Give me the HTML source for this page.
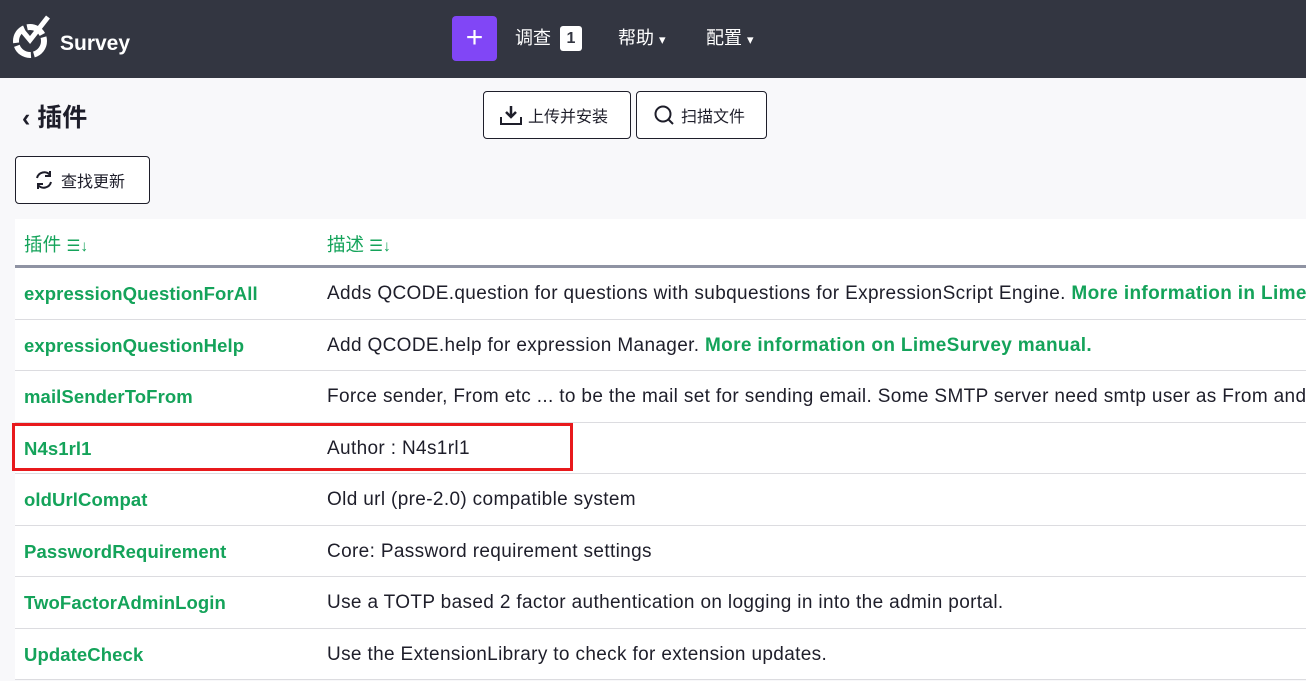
<!DOCTYPE html>
<html><head><meta charset="utf-8"><style>
*{box-sizing:border-box;margin:0;padding:0}
body{width:1306px;height:681px;overflow:hidden;background:#f8f8fa;font-family:"Liberation Sans","Noto Sans CJK SC",sans-serif;color:#1e1e2a;position:relative}
.nav{position:absolute;left:0;top:0;width:1306px;height:78px;background:#333641;color:#fff}
.btn{position:absolute;border:1px solid #1e1e2a;border-radius:4px;background:#fff;font-size:16px;display:flex;align-items:center;gap:6px;padding-left:14px}
.tbl{position:absolute;left:15px;top:219px;width:1291px;background:#fff}
.row{height:51.5px;border-bottom:1px solid #dcdce0;position:relative;font-size:18.5px;white-space:nowrap;overflow:hidden}
.row span{position:absolute;top:15px}
.c1{left:9px;color:#14a35a;font-weight:bold;letter-spacing:0.1px}
.c2{left:312px;font-size:19px;letter-spacing:0.35px}
.g{color:#14a35a;font-weight:bold}
.hd{height:49px;border-bottom:3px solid #8f93a3;color:#14a35a}
.hd span{top:12px}
</style></head><body>
<div class="nav">
<svg style="position:absolute;left:12px;top:15px" width="40" height="45" viewBox="0 0 40 45"><path d="M8 13 L18 25 L36 2" stroke="#fff" stroke-width="5" fill="none"/><circle cx="18" cy="26" r="14" stroke="#fff" stroke-width="6" fill="none" stroke-dasharray="18 3"/></svg>
<div style="position:absolute;left:60px;top:32px;font-size:21px;font-weight:bold">Survey</div>
<div style="position:absolute;left:452px;top:16px;width:45px;height:45px;background:#8146f6;border-radius:4px;font-size:30px;text-align:center;line-height:44px">+</div>
<div style="position:absolute;left:515px;top:24px;font-size:18px">调查</div>
<div style="position:absolute;left:560px;top:26px;width:22px;height:25px;background:#fff;color:#333641;border-radius:3px;font-weight:bold;text-align:center;line-height:25px">1</div>
<div style="position:absolute;left:618px;top:24px;font-size:18px">帮助 <span style="font-size:13px">▾</span></div>
<div style="position:absolute;left:706px;top:24px;font-size:18px">配置 <span style="font-size:13px">▾</span></div>
</div>
<div style="position:absolute;left:22px;top:98px;font-size:25px;font-weight:bold">‹ 插件</div>
<div class="btn" style="left:483px;top:91px;width:148px;height:48px;padding-left:16px"><svg width="22" height="20" viewBox="0 0 22 20"><path d="M11 1v11M6 7l5 5 5-5" stroke="#1e1e2a" stroke-width="2.5" fill="none"/><path d="M1 12v7h20v-7" stroke="#1e1e2a" stroke-width="2" fill="none"/></svg>上传并安装</div>
<div class="btn" style="left:636px;top:91px;width:131px;height:48px;padding-left:16px"><svg width="22" height="22" viewBox="0 0 22 22"><circle cx="10" cy="10" r="7.5" stroke="#1e1e2a" stroke-width="2" fill="none"/><path d="M15 15l5 5" stroke="#1e1e2a" stroke-width="2"/></svg>扫描文件</div>
<div class="btn" style="left:15px;top:156px;width:135px;height:48px;padding-left:17px"><svg width="22" height="22" viewBox="0 0 22 22"><path d="M4 9a7.5 7.5 0 0 1 13-3M18 13a7.5 7.5 0 0 1-13 3" stroke="#1e1e2a" stroke-width="2" fill="none"/><path d="M17 2v5h-5M5 20v-5h5" stroke="#1e1e2a" stroke-width="2" fill="none"/></svg>查找更新</div>
<div class="tbl">
<div class="row hd"><span class="c1" style="font-weight:normal;color:#14a35a">插件 <small>☰↓</small></span><span class="c2" style="color:#14a35a;font-size:18.5px;letter-spacing:0">描述 <small>☰↓</small></span></div>
<div class="row"><span class="c1">expressionQuestionForAll</span><span class="c2">Adds QCODE.question for questions with subquestions for ExpressionScript Engine. <b class="g">More information in LimeSurvey manual.</b></span></div>
<div class="row"><span class="c1">expressionQuestionHelp</span><span class="c2">Add QCODE.help for expression Manager. <b class="g">More information on LimeSurvey manual.</b></span></div>
<div class="row"><span class="c1">mailSenderToFrom</span><span class="c2">Force sender, From etc ... to be the mail set for sending email. Some SMTP server need smtp user as From and</span></div>
<div class="row"><span class="c1">N4s1rl1</span><span class="c2">Author : N4s1rl1</span></div>
<div class="row"><span class="c1">oldUrlCompat</span><span class="c2">Old url (pre-2.0) compatible system</span></div>
<div class="row"><span class="c1">PasswordRequirement</span><span class="c2">Core: Password requirement settings</span></div>
<div class="row"><span class="c1">TwoFactorAdminLogin</span><span class="c2">Use a TOTP based 2 factor authentication on logging in into the admin portal.</span></div>
<div class="row"><span class="c1">UpdateCheck</span><span class="c2">Use the ExtensionLibrary to check for extension updates.</span></div>
</div>
<div style="position:absolute;left:12px;top:423px;width:561px;height:48px;border:3px solid #e8191c"></div>
</body></html>
